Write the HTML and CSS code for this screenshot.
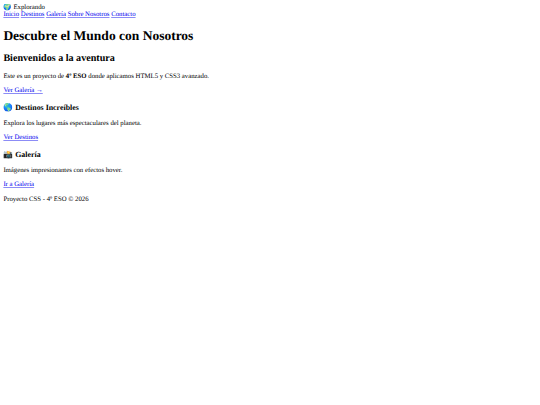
FILE: index.html
```html
<!DOCTYPE html>
<html lang="es">
<head>
<meta charset="UTF-8">
<meta name="viewport" content="width=device-width, initial-scale=1.0">
<title>Explorando</title>
<link rel="stylesheet" href="styles.css">
</head>
<body>
  <header>
    <div class="logo">🌍 Explorando</div>
    <nav>
      <a href="#">Inicio</a>
      <a href="#">Destinos</a>
      <a href="#">Galería</a>
      <a href="#">Sobre Nosotros</a>
      <a href="#">Contacto</a>
    </nav>
  </header>
  <main>
    <h1>Descubre el Mundo con Nosotros</h1>
    <section>
      <h2>Bienvenidos a la aventura</h2>
      <p>Este es un proyecto de <strong>4º ESO</strong> donde aplicamos HTML5 y CSS3 avanzado.</p>
      <a href="#">Ver Galería →</a>
    </section>
    <section>
      <h3>🌎 Destinos Increíbles</h3>
      <p>Explora los lugares más espectaculares del planeta.</p>
      <a href="#">Ver Destinos</a>
    </section>
    <section>
      <h3>📸 Galería</h3>
      <p>Imágenes impresionantes con efectos hover.</p>
      <a href="#">Ir a Galería</a>
    </section>
  </main>
  <footer>
    <p>Proyecto CSS - 4º ESO © 2026</p>
  </footer>
</body>
</html>
```

FILE: styles.css
```css
body {
  margin: 3.9px 3.375px 3.375px;
  font-family: "Liberation Serif", serif;
  font-size: 6.75px;
  line-height: 7.6px;
  color: #000;
  background-color: #fff;
  text-rendering: geometricPrecision;
}
a {
  color: #00e;
  text-decoration-color: #8c8cf6;
}
h1 {
  font-size: 13.5px;
  line-height: 15.6px;
  margin: 9.05px 0;
}
h2 {
  font-size: 10.125px;
  line-height: 11.6px;
  margin: 8.4px 0;
}
h3 {
  font-size: 7.9px;
  line-height: 9.4px;
  margin: 7.9px 0;
}
p {
  margin: 6.75px 0;
}
```
